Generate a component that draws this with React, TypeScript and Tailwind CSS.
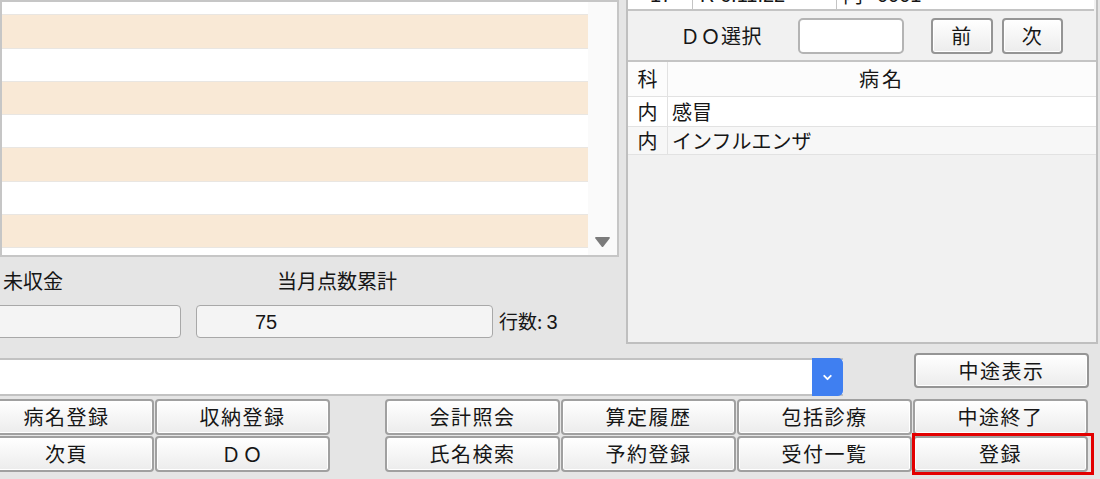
import { ChevronDown } from "lucide-react";

const btn =
  "flex items-center justify-center rounded-[4px] border border-[#959595] bg-gradient-to-b from-white to-[#ececec] shadow-[inset_0_0_0_1px_#ffffff] text-[20px] tracking-[1.5px] leading-none";

const leftButtons = [
  ["病名登録", "収納登録"],
  ["次頁", "ＤＯ"],
];

const rightButtons = [
  ["会計照会", "算定履歴", "包括診療", "中途終了"],
  ["氏名検索", "予約登録", "受付一覧", "登録"],
];

function Stripes() {
  const rows = Array.from({ length: 8 }, (_, i) => i);
  return (
    <div className="-mt-[20px]">
      {rows.map((i) => (
        <div
          key={i}
          className={`h-[33.3px] border-b border-[#e9e6e2] ${i % 2 === 1 ? "bg-[#f9e9d6]" : "bg-white"}`}
        />
      ))}
    </div>
  );
}

export default function App() {
  return (
    <div className="w-[1100px] h-[479px] overflow-hidden bg-[#e5e5e5] text-[#161616] font-['Noto_Sans_CJK_JP','Noto_Sans',sans-serif]">
      {/* upper area */}
      <div className="flex h-[353px]">
        <div className="w-[619px] shrink-0 flex flex-col">
          <div className="h-[257px] border-2 border-[#c6c6c6] bg-white flex overflow-hidden">
            <div className="flex-1 overflow-hidden">
              <Stripes />
            </div>
            <div className="w-[29px] bg-[#fafafa] flex items-end justify-center pb-[7px]">
              <svg width="17" height="12" viewBox="0 0 17 12">
                <path d="M2 1 H15 Q16.5 1 15.6 2.4 L9.4 10.6 Q8.5 11.6 7.6 10.6 L1.4 2.4 Q0.5 1 2 1 Z" fill="#7b7b7b" />
              </svg>
            </div>
          </div>
          <div className="h-[48px] flex items-center text-[20px]">
            <span className="ml-[3px] w-[193px]">未収金</span>
            <span className="ml-[81px]">当月点数累計</span>
          </div>
          <div className="h-[33px] flex items-center">
            <div className="ml-[-10px] w-[191px] h-full rounded-[4px] border border-[#a8a8a8] bg-[#f4f4f4]" />
            <div className="ml-[15px] w-[297px] h-full rounded-[4px] border border-[#a8a8a8] bg-[#f4f4f4] flex items-center pl-[58px] text-[20px] font-['Liberation_Sans',sans-serif]">
              75
            </div>
            <span className="ml-[6px] text-[19px] whitespace-nowrap">
              行数: <span className="text-[20px] font-['Liberation_Sans',sans-serif]">3</span>
            </span>
          </div>
        </div>

        {/* right panel */}
        <div className="ml-[7px] w-[472px] h-[344px] border-x-2 border-b-2 border-[#bfbfbf] bg-[#f1f1f1] flex flex-col">
          <div className="h-[11px] shrink-0 bg-white border-b-2 border-[#c4c4c4] mr-[2px] overflow-hidden flex text-[20px] leading-[24px]">
            <div className="w-[65px] border-r border-[#c4c4c4] pl-[22px] -mt-[17px] font-['Liberation_Sans',sans-serif]">17</div>
            <div className="w-[144px] border-r border-[#c4c4c4] pl-[7px] -mt-[17px] font-['Liberation_Sans',sans-serif]">R 6.11.22</div>
            <div className="pl-[6px] -mt-[17px]">内</div>
            <div className="pl-[14px] -mt-[17px] font-['Liberation_Sans',sans-serif]">0001</div>
          </div>
          <div className="h-[49px] shrink-0 flex items-center">
            <span className="ml-[52px] text-[20px] tracking-[0.5px]">ＤＯ選択</span>
            <div className="ml-[36px] w-[106px] h-[36px] rounded-[5px] border-2 border-[#b4b4b4] bg-white" />
            <button className={`${btn} ml-[27px] w-[62px] h-[36px] border-2 border-[#9c9c9c]`}>前</button>
            <button className={`${btn} ml-[9px] w-[61px] h-[36px] border-2 border-[#9c9c9c]`}>次</button>
          </div>
          <div className="flex-1 border-t-2 border-[#c4c4c4] text-[20px]">
            <div className="flex h-[35px] bg-[#fcfcfc] border-b border-[#e2e2e2]">
              <div className="w-[40px] border-r border-[#e2e2e2] flex items-center justify-center">科</div>
              <div className="flex-1 flex items-center justify-center tracking-[3px]">病名</div>
            </div>
            <div className="flex h-[30px] bg-white border-b border-[#e2e2e2]">
              <div className="w-[40px] border-r border-[#e2e2e2] flex items-center justify-center">内</div>
              <div className="flex-1 flex items-center pl-[4px]">感冒</div>
            </div>
            <div className="flex h-[28px] bg-[#f7f7f7] border-b border-[#e2e2e2]">
              <div className="w-[40px] border-r border-[#e2e2e2] flex items-center justify-center">内</div>
              <div className="flex-1 flex items-center pl-[4px]">インフルエンザ</div>
            </div>
          </div>
        </div>
      </div>

      {/* combobox row */}
      <div className="h-[46px] flex items-start">
        <div className="mt-[5px] w-[843px] h-[38px] flex border-y-2 border-[#c2c2c2] bg-white">
          <div className="flex-1" />
          <div className="-my-[2px] w-[31px] rounded-r-[5px] bg-[#3f7ff1] flex items-center justify-center">
            <ChevronDown size={13} strokeWidth={3.5} color="#ffffff" />
          </div>
        </div>
        <button className={`${btn} ml-[71px] w-[175px] h-[35px] border-2 border-[#9c9c9c]`}>中途表示</button>
      </div>

      {/* button grid */}
      <div className="flex">
        <div className="ml-[-21px] grid grid-cols-[175px_175px] gap-[1px]">
          {leftButtons.flat().map((t) => (
            <button key={t} className={`${btn} h-[36px] border-2 border-[#a0a0a0]`}>
              {t}
            </button>
          ))}
        </div>
        <div className="ml-[55px] grid grid-cols-[175px_175px_175px_175px] gap-[1px]">
          {rightButtons.flat().map((t) => (
            <div key={t} className="relative">
              <button className={`${btn} w-full h-[36px] border-2 border-[#a0a0a0]`}>{t}</button>
              {t === "登録" && (
                <div className="absolute -top-[3px] -bottom-[3px] -left-[1px] -right-[6px] border-[3px] border-[#e30000]" />
              )}
            </div>
          ))}
        </div>
      </div>
    </div>
  );
}
